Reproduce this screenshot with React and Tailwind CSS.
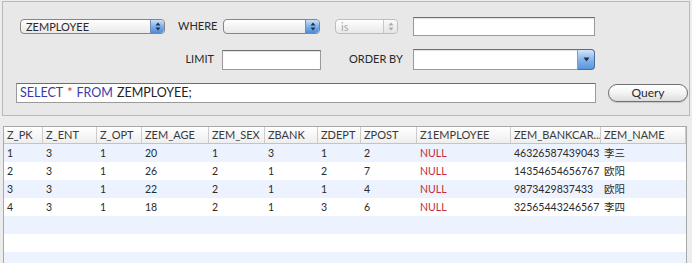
import React from 'react';

const font = { fontFamily: 'Lato, "Noto Sans CJK SC", sans-serif' };

const columns = ['Z_PK', 'Z_ENT', 'Z_OPT', 'ZEM_AGE', 'ZEM_SEX', 'ZBANK', 'ZDEPT', 'ZPOST', 'Z1EMPLOYEE', 'ZEM_BANKCAR...', 'ZEM_NAME'];

const rows = [
    ['1', '3', '1', '20', '1', '3', '1', '2', 'NULL', '46326587439043', '李三'],
    ['2', '3', '1', '26', '2', '1', '2', '7', 'NULL', '14354654656767', '欧阳'],
    ['3', '3', '1', '22', '2', '1', '1', '4', 'NULL', '9873429837433', '欧阳'],
    ['4', '3', '1', '18', '2', '1', '3', '6', 'NULL', '32565443246567', '李四'],
];

const gridCols = 'grid grid-cols-[39px_54px_45px_67px_56px_53px_43px_56px_94px_90px_85px]';

const Stepper = ({ disabled }) => (
    <div
        className={`flex h-full w-[14px] items-center justify-center rounded-r-[4px] border-l ${
            disabled
                ? 'border-[#c8c8c8] bg-gradient-to-b from-[#fafafa] to-[#e4e4e4]'
                : 'border-[#6f8fb8] bg-gradient-to-b from-[#c9e1fa] via-[#7fb0e8] to-[#4d8ad6]'
        }`}
    >
        <svg width="6" height="9" viewBox="0 0 6 9">
            <path d="M3 0.5 L5.5 3.5 L0.5 3.5 Z" fill={disabled ? '#aaa' : '#1c2f4d'} />
            <path d="M3 8.5 L5.5 5.5 L0.5 5.5 Z" fill={disabled ? '#aaa' : '#1c2f4d'} />
        </svg>
    </div>
);

const Popup = ({ label, width, disabled }) => (
    <div
        className={`flex h-[15px] items-stretch overflow-hidden rounded-[4px] border ${width} ${
            disabled ? 'border-[#bdbdbd]' : 'border-[#858585]'
        } bg-gradient-to-b from-white to-[#e9e9e9]`}
    >
        <span className={`flex-1 pl-[5px] text-[11px] leading-[13px] ${disabled ? 'text-[#a8a8a8]' : 'text-[#2a2a2a]'}`}>{label}</span>
        <Stepper disabled={disabled} />
    </div>
);

const TextField = ({ className }) => (
    <div className={`border border-[#9a9a9a] border-t-[#6e6e6e] bg-white shadow-[inset_0_1px_1px_rgba(0,0,0,0.12)] ${className}`} />
);

const App = () => {
    return (
        <div className="h-[263px] w-[692px] overflow-hidden bg-[#ececec] pt-[1px]" style={font}>
            <div className="mx-[2px] h-[115px] border border-[#b9b9b9] bg-[#e8e8e8]">
                <div className="mt-[14px] flex h-[20px] items-center">
                    <div className="ml-[17px]">
                        <Popup label="ZEMPLOYEE" width="w-[145px]" />
                    </div>
                    <span className="ml-[13px] w-[45px] text-[11px] text-[#2a2a2a]">WHERE</span>
                    <Popup label="" width="w-[97px]" />
                    <div className="ml-[15px]">
                        <Popup label="is" width="w-[63px]" disabled />
                    </div>
                    <TextField className="ml-[15px] h-[19px] w-[182px]" />
                </div>

                <div className="mt-[13px] flex h-[21px] items-center">
                    <span className="w-[211px] text-right text-[11px] text-[#2a2a2a]">LIMIT</span>
                    <TextField className="ml-[8px] h-[20px] w-[99px]" />
                    <span className="ml-[28px] w-[64px] text-[11px] text-[#2a2a2a]">ORDER BY</span>
                    <div className="flex h-[21px] w-[182px]">
                        <TextField className="h-full flex-1" />
                        <div className="flex w-[17px] items-center justify-center rounded-r-[4px] border border-l-0 border-[#4d6d99] bg-gradient-to-b from-[#d2e6fb] via-[#86b6ea] to-[#5a95dc]">
                            <svg width="7" height="5" viewBox="0 0 7 5">
                                <path d="M0.5 0.5 L6.5 0.5 L3.5 4.5 Z" fill="#1c2f4d" />
                            </svg>
                        </div>
                    </div>
                </div>

                <div className="mt-[13px] flex h-[20px] items-center">
                    <div className="ml-[13px] flex h-[20px] w-[580px] items-center border border-[#9a9a9a] border-t-[#6e6e6e] bg-white pl-[3px] text-[12.5px]">
                        <span className="text-[#3a3aa8]">SELECT</span>
                        <span className="ml-[4px] text-[#d0342c]">*</span>
                        <span className="ml-[4px] text-[#3a3aa8]">FROM</span>
                        <span className="ml-[4px] text-[#222]">ZEMPLOYEE;</span>
                    </div>
                    <button
                        type="button"
                        className="ml-[12px] h-[18px] w-[80px] rounded-full border border-[#6f6f6f] bg-gradient-to-b from-white via-[#f4f4f4] to-[#dcdcdc] text-[12px] font-normal leading-[14px] text-[#2a2a2a] shadow-[0_1px_1px_rgba(0,0,0,0.15)]"
                    >
                        Query
                    </button>
                </div>
            </div>

            <div className="ml-[3px] mt-[10px] w-[684px] border-x border-t border-[#a9a9a9] bg-white">
                <div className={`${gridCols} h-[17px] border-b border-[#c4c4c4] bg-gradient-to-b from-white to-[#eeeeee]`}>
                    {columns.map((c) => (
                        <div key={c} className="overflow-hidden whitespace-nowrap border-r border-[#cccccc] pl-[3px] text-[11px] leading-[16px] text-[#3a3a3a]">
                            {c}
                        </div>
                    ))}
                </div>
                {[0, 1, 2, 3, 4, 5, 6].map((i) => (
                    <div key={i} className={`${gridCols} h-[18px] ${i % 2 === 0 ? 'bg-[#edf3fe]' : 'bg-white'}`}>
                        {(rows[i] || []).map((v, j) => (
                            <div
                                key={j}
                                className={`whitespace-nowrap pl-[3px] text-[10.5px] leading-[18px] ${v === 'NULL' ? 'text-[#c42b3c]' : 'text-[#2a2a2a]'}`}
                            >
                                {v}
                            </div>
                        ))}
                    </div>
                ))}
            </div>
        </div>
    );
};

export default App;
